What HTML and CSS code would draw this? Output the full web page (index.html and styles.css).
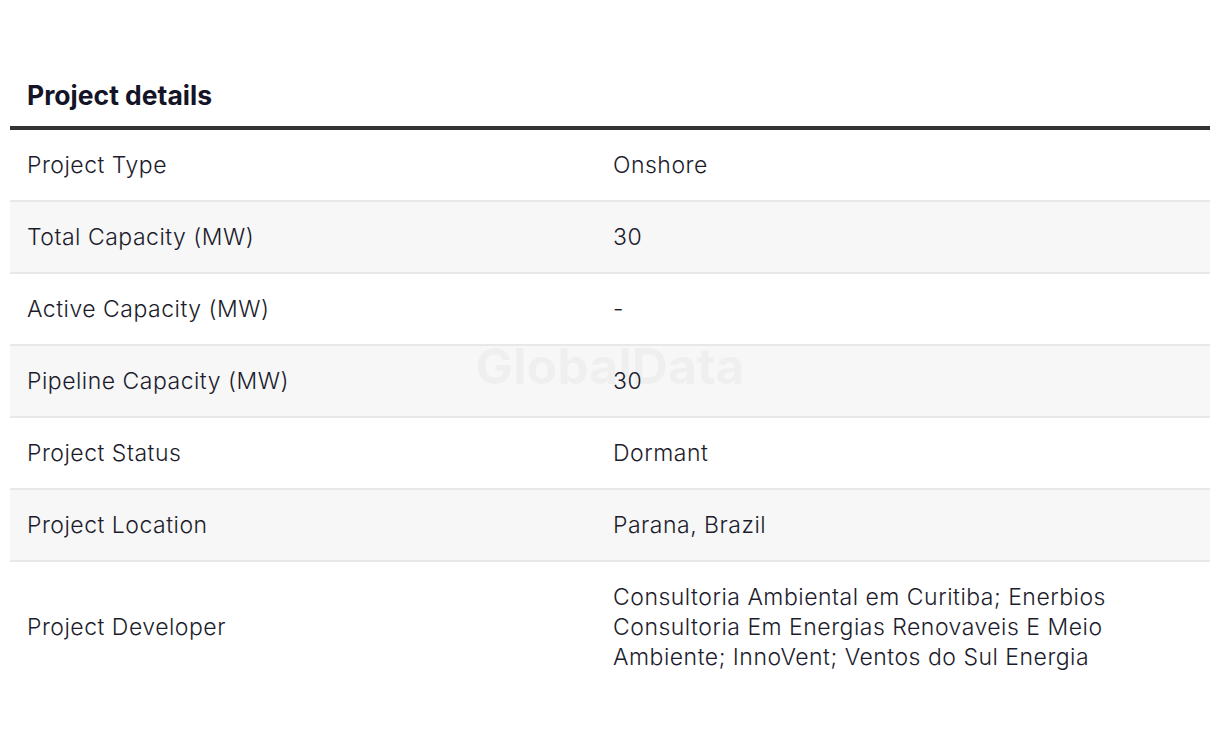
FILE: index.html
```html
<!DOCTYPE html>
<html>
<head>
<meta charset="utf-8">
<link rel="stylesheet" href="styles.css">
</head>
<body>
<section class="details">
  <h2 class="title">Project details</h2>
  <div class="table-wrap">
    <table class="grid">
      <tbody>
        <tr><td class="label">Project Type</td><td class="value">Onshore</td></tr>
        <tr><td class="label">Total Capacity (MW)</td><td class="value">30</td></tr>
        <tr><td class="label">Active Capacity (MW)</td><td class="value">-</td></tr>
        <tr><td class="label">Pipeline Capacity (MW)</td><td class="value">30</td></tr>
        <tr><td class="label">Project Status</td><td class="value">Dormant</td></tr>
        <tr><td class="label">Project Location</td><td class="value">Parana, Brazil</td></tr>
        <tr><td class="label">Project Developer</td><td class="value">Consultoria Ambiental em Curitiba; Enerbios Consultoria Em Energias Renovaveis E Meio Ambiente; InnoVent; Ventos do Sul Energia</td></tr>
      </tbody>
    </table>
    <div class="watermark">GlobalData</div>
  </div>
</section>
</body>
</html>
```
FILE: styles.css
```css
html, body {
  margin: 0;
  padding: 0;
  background: #ffffff;
}
body {
  font-family: Inter, "Liberation Sans", sans-serif;
  color: #1c1c2c;
}
.details {
  padding: 75px 10px 0 10px;
}
.title {
  margin: 0;
  padding: 0 0 11px 17px;
  font-size: 26.5px;
  line-height: 40px;
  font-weight: 700;
  color: #141428;
}
.table-wrap {
  position: relative;
}
.grid {
  width: 1200px;
  border-collapse: collapse;
  border-top: 4px solid #333333;
}
.grid td {
  padding: 20px 17px 20px 16px;
  font-size: 23px;
  font-weight: 300;
  letter-spacing: 0.5px;
  line-height: 30px;
  vertical-align: middle;
  border-bottom: 2px solid #e8e8e8;
}
.grid td.label {
  padding-left: 17px;
}
.grid tr:nth-child(even) td {
  background: #f7f7f7;
}
.grid tr:last-child td {
  border-bottom: none;
}
.label {
  width: 553px;
}
.watermark {
  position: absolute;
  left: 0;
  right: 0;
  top: 215px;
  text-align: center;
  font-size: 50px;
  line-height: 50px;
  font-weight: 700;
  color: rgba(0, 0, 0, 0.03);
  pointer-events: none;
}
```
